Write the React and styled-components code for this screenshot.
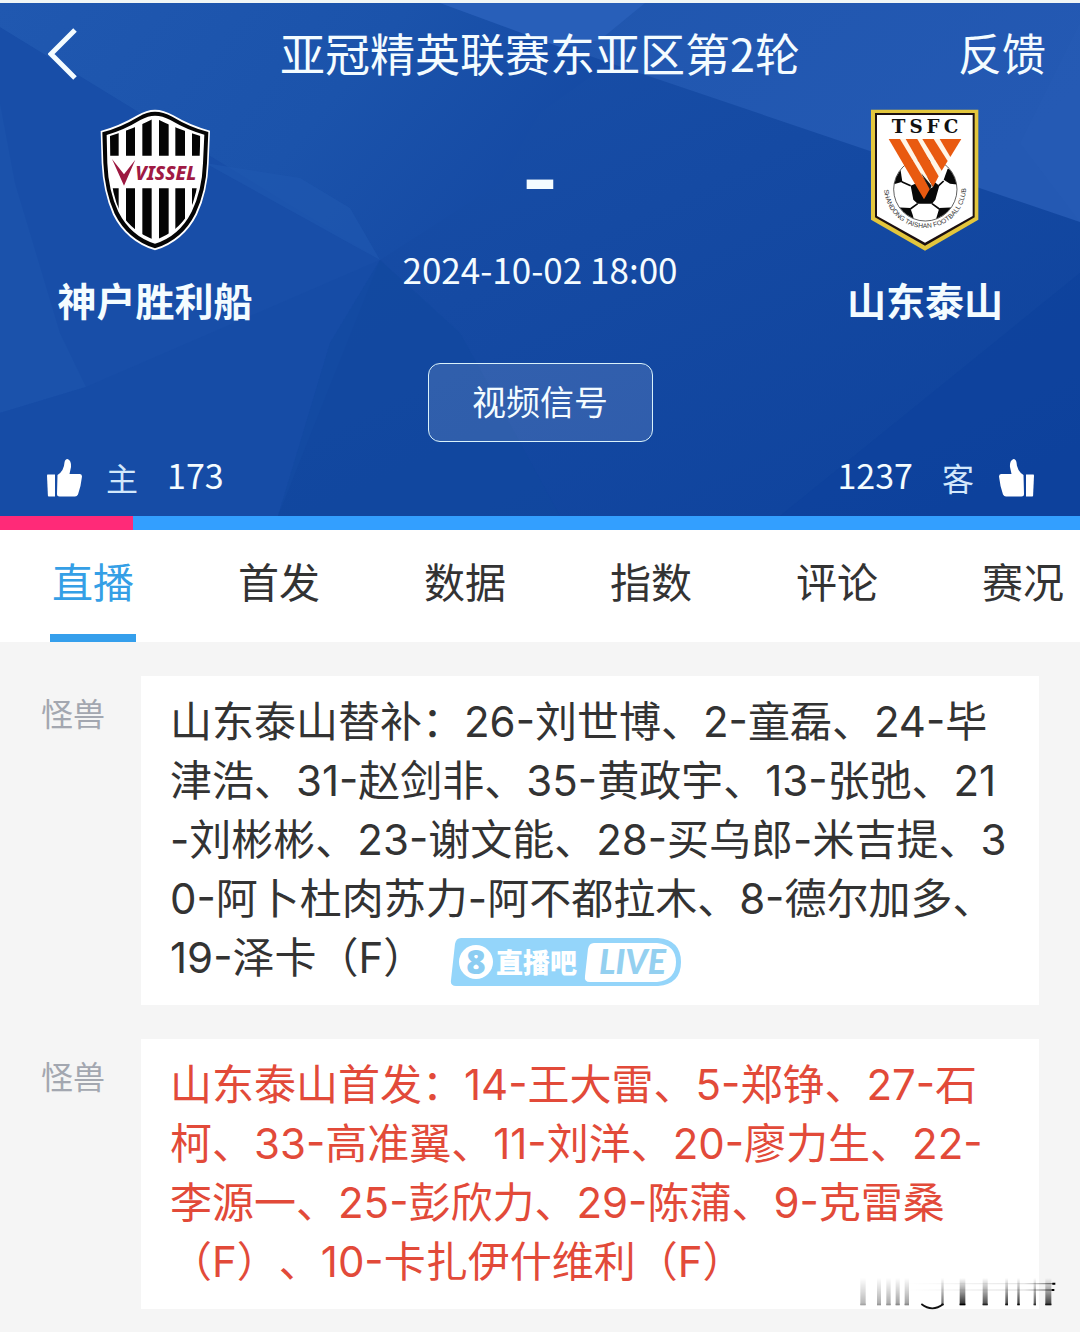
import React from "react";
import styled, { createGlobalStyle } from "styled-components";

const cjk = '"Noto Sans CJK SC", sans-serif';

const GlobalStyle = createGlobalStyle`
  * { box-sizing: border-box; }
  body {
    margin: 0;
    background: #f5f5f5;
    font-family: ${cjk};
    color: #333;
  }
  button { font: inherit; color: inherit; background: none; border: 0; padding: 0; cursor: pointer; }
`;

const Page = styled.div`
  position: relative;
`;

/* ---------- header ---------- */

const Header = styled.header`
  position: relative;
  isolation: isolate;
  overflow: hidden;
  border-top: 3px solid #f0f6f6;
  background: #174ca5;
  color: #f4fcff;
`;

const Backdrop = styled.svg`
  position: absolute;
  inset: 0;
  width: 100%;
  height: 100%;
  z-index: -1;
`;

const TitleBar = styled.div`
  display: grid;
  grid-template-columns: 160px 1fr 160px;
  align-items: center;
  height: 102px;
  padding: 0 34px;
  font-size: 45px;
`;

const BackButton = styled.button`
  && {
    justify-self: start;
    display: flex;
    padding-left: 14px;
  }
`;

const Title = styled.h1`
  margin: 0;
  padding-bottom: 4px;
  font-size: inherit;
  font-weight: 400;
  text-align: center;
  white-space: nowrap;
`;

const Feedback = styled.button`
  && {
    justify-self: end;
    padding-bottom: 4px;
    font-size: 44px;
  }
`;

const Match = styled.section`
  display: grid;
  grid-template-columns: 310px 1fr 310px;
  padding-top: 4px;
`;

const Team = styled.div`
  display: flex;
  flex-direction: column;
  align-items: center;
  gap: 24px;
`;

const Crest = styled.svg`
  width: 110px;
  height: 142px;
`;

const TeamName = styled.h2`
  margin: 0;
  font-size: 39px;
  line-height: 48px;
  font-weight: 700;
`;

const Center = styled.div`
  display: flex;
  flex-direction: column;
  align-items: center;
`;

const Score = styled.div`
  height: 135px;
  font: 700 80px/140px Inter, ${cjk};
`;

const Kickoff = styled.time`
  font-size: 35px;
  line-height: 50px;
`;

const SignalButton = styled.button`
  && {
    width: 225px;
    height: 79px;
    margin-top: 69px;
    padding-bottom: 4px;
    border: 1px solid #d9f2fb;
    border-radius: 12px;
    background: rgba(255, 255, 255, 0.13);
    font-size: 34px;
  }
`;

const Votes = styled.div`
  display: flex;
  justify-content: space-between;
  height: 74px;
  padding: 0 44px 4px;
`;

const VoteButton = styled.button`
  display: flex;
  flex-direction: ${(p) => (p.$away ? "row-reverse" : "row")};
  align-items: center;
  gap: 24px;
`;

const Side = styled.span`
  font-size: 32px;
  line-height: 50px;
  color: #d3e8fb;
`;

const Count = styled.span`
  padding: 0 5px 4px;
  font-size: 34px;
  line-height: 50px;
`;

const Ratio = styled.div`
  display: flex;
  height: 14px;
  background: #339fff;
`;

const RatioHome = styled.div`
  background: #ff2a78;
`;

/* ---------- tabs ---------- */

const Tabs = styled.nav`
  display: flex;
  justify-content: space-between;
  height: 112px;
  padding: 0 14px 0 50px;
  background: #fff;
`;

const Tab = styled.button`
  && {
    width: 86px;
    padding-bottom: ${(p) => (p.$active ? "4px" : "12px")};
    border-bottom: ${(p) => (p.$active ? "8px solid #359fec" : "0")};
    color: ${(p) => (p.$active ? "#359fe6" : "#333")};
    font-size: 41px;
    white-space: nowrap;
  }
`;

/* ---------- feed ---------- */

const Feed = styled.main`
  display: flex;
  flex-direction: column;
  gap: 34px;
  padding: 34px 41px 22px 0;
`;

const Entry = styled.article`
  display: grid;
  grid-template-columns: 141px 1fr;
`;

const Author = styled.span`
  padding: 12px 0 0 41px;
  font-size: 32px;
  line-height: 48px;
  color: #a3a7b0;
`;

const Message = styled.p`
  margin: 0;
  padding: 16px 0 18px 29px;
  background: #fff;
  color: ${(p) => (p.$highlight ? "#e24a39" : "#333")};
  font: 400 42px/59px Inter, ${cjk};
  text-spacing-trim: space-all;
  white-space: nowrap;
`;

const LiveBadge = styled.svg`
  width: 232px;
  height: 50px;
  margin-left: 25px;
  vertical-align: middle;
`;

const Watermark = styled.svg`
  position: absolute;
  right: 23px;
  bottom: 19px;
  width: 200px;
  height: 36px;
  pointer-events: none;
`;

function Facets() {
  return (
    <Backdrop viewBox="0 0 1080 513" preserveAspectRatio="none" aria-hidden="true">
      <defs>
        <linearGradient id="base" x1="0" y1="0" x2="1" y2="1">
          <stop offset="0" stopColor="#1b52ab" />
          <stop offset="0.5" stopColor="#154aa3" />
          <stop offset="1" stopColor="#0e429c" />
        </linearGradient>
        <linearGradient id="upper" x1="0" y1="0" x2="1" y2="0.35">
          <stop offset="0" stopColor="#2058b0" />
          <stop offset="0.6" stopColor="#1b53ab" />
          <stop offset="1" stopColor="#154aa4" />
        </linearGradient>
        <linearGradient id="corner" x1="0" y1="0" x2="1" y2="0.4">
          <stop offset="0" stopColor="#1f56ae" />
          <stop offset="1" stopColor="#2459b3" />
        </linearGradient>
      </defs>
      <path fill="url(#base)" d="M0 0H1080V513H0Z" />
      <path fill="#184ea8" d="M0 24L380 257L278 513H0Z" />
      <path fill="url(#upper)" d="M0 0H440L610 60L540 110L500 180L380 257L0 24Z" />
      <path fill="#2058b0" d="M205 160L300 175L350 205L380 257Z" opacity="0.6" />
      <path fill="#1b52ab" d="M0 100L15 180L60 330L86 384L0 410Z" />
      <path fill="#164ba5" d="M380 257L86 384L0 410V513H278L330 340Z" opacity="0.6" />
      <path fill="#11479f" d="M380 257L330 340L278 513H560L460 330Z" opacity="0.6" />
      <path fill="url(#corner)" d="M440 0H1080V219L610 60Z" />
      <path fill="#285fb9" d="M440 0H645L600 37L560 44Z" />
      <path fill="#285db7" d="M1080 20L1020 140L1080 219Z" opacity="0.3" />
      <path fill="#0c409b" d="M1080 270L780 513H1080Z" opacity="0.5" />
    </Backdrop>
  );
}

function VisselCrest() {
  return (
    <Crest viewBox="60 28 330 426" role="img" aria-label="VISSEL">
      <defs>
        <clipPath id="visselField">
          <path d="M90 109Q160 88 225 55Q290 88 361 109L358 200Q354 285 326 340Q292 398 225 421Q158 398 122 340Q94 285 91 200Z" />
        </clipPath>
      </defs>
      <path fill="#fff" d="M62 94Q118 79 172 47Q199 30 225 30Q251 30 280 47Q334 79 390 93L386 190Q383 277 351 345Q311 425 225 452Q139 425 99 345Q69 277 65 190Z" />
      <path fill="#050505" d="M67 98Q123 83 176 51Q201 36 225 36Q249 36 277 51Q330 83 385 97L381 190Q378 276 346 342Q307 420 225 446Q143 420 104 342Q74 276 70 190Z" />
      <path fill="#fff" d="M80 106Q134 90 181 61Q205 48 225 48Q247 48 271 61Q322 91 373 105L369 191Q366 274 335 336Q298 409 225 432Q152 409 115 336Q85 274 82 191Z" />
      <g clipPath="url(#visselField)" fill="#050505">
        <path d="M88 50h28v118h-28zM138 50h27v118h-27zM187 50h28v118h-28zM237 50h29v118h-29zM286 50h29v118h-29zM336 50h28v118h-28z" />
        <path d="M88 266h28v180h-28zM138 266h27v180h-27zM187 266h28v180h-28zM237 266h29v180h-29zM286 266h29v180h-29zM336 266h28v180h-28z" />
      </g>
      <path fill="#9c1840" d="M96 178L132 224L166 180L132 258Z" />
      <text x="166" y="242" fill="#a01a44" fontFamily="'Noto Sans', sans-serif" fontWeight="800" fontStyle="italic" fontSize="58">VISSEL</text>
    </Crest>
  );
}

function TaishanCrest() {
  return (
    <Crest viewBox="60 28 330 426" role="img" aria-label="TSFC">
      <defs>
        <path id="clubArc" d="M102 262A123 123 0 1 0 348 262" />
        <clipPath id="ball"><circle cx="226" cy="269" r="94" /></clipPath>
      </defs>
      <path fill="#e3c63d" d="M63 30H385V360L225 453L63 360Z" />
      <path fill="#1c1010" d="M75 40H374V353L225 438L75 353Z" />
      <path fill="#fff" d="M81 46H368V349L225 429L81 349Z" />
      <text x="231" y="101" textAnchor="middle" fill="#111" fontFamily="'DejaVu Serif', serif" fontWeight="700" fontSize="55" letterSpacing="12">TSFC</text>
      <circle cx="226" cy="269" r="95" fill="#fff" stroke="#111" strokeWidth="2" />
      <g clipPath="url(#ball)">
        <g fill="#080808">
          <path d="M190 184Q225 172 256 184L236 190L215 186Z" />
          <path d="M182 258L206 248L226 230L245 240L268 258L256 300L246 312H203L190 300Z" />
          <path d="M128 255L134 215L150 200L157 246Z" />
          <path d="M324 255L318 215L293 207L281 240L300 252Z" />
          <path d="M136 323L181 325L188 345L194 368H160Z" />
          <path d="M316 323L268 325L262 345L255 368H294Z" />
        </g>
        <path fill="none" stroke="#080808" strokeWidth="5" d="M155 246L182 258M281 244L266 258M203 312L181 328M246 312L268 328" />
      </g>
      <g fill="#fff6e8">
        <path d="M150 118H167L249 262L240 267Z" />
        <path d="M202 118H217L275 213L266 230Z" />
        <path d="M251 118H269L301 172L293 184Z" />
      </g>
      <g fill="#e95a10">
        <path d="M116 118H150L240 267L222 299Z" />
        <path d="M167 118H202L266 230L249 262Z" />
        <path d="M217 118H251L293 184L275 213Z" />
        <path d="M269 118H334L301 172Z" />
      </g>
      <path fill="#151515" d="M213 220L245 258L240 270Z" />
      <text fill="#333" fontFamily="'Liberation Sans', sans-serif" fontSize="20">
        <textPath href="#clubArc" startOffset="8">SHANDONG TAISHAN FOOTBALL CLUB</textPath>
      </text>
    </Crest>
  );
}

function Thumb({ away }) {
  return (
    <svg width="38" height="40" viewBox="0 0 38 40" aria-hidden="true">
      <g fill="#fff" transform={away ? "translate(38 2) scale(-1 1)" : "translate(1 2)"}>
        <path d="M2.600 15.500H10V37.500H3.700Q3 37.500 2.900 36.500L2 16.500Q2 15.500 2.600 15.500Z" />
        <path d="M12.500 16Q19 12 19.500 3.500Q20 0 22.500 0Q26.500 1.500 26 8L24.500 15H35Q37 15 37 17.500Q36 27 33 35.500Q32 37.500 30 37.500H14.500Q12 37.500 12 35Z" />
      </g>
    </svg>
  );
}

function ZhiboLive() {
  return (
    <LiveBadge viewBox="0 0 232 50" role="img" aria-label="直播吧 LIVE">
      <path fill="#94d5fa" d="M11 1H208Q231 3 231 25Q231 47 208 49H6Q0 49 1 43L5 7Q6 1 11 1Z" />
      <circle cx="26" cy="25" r="17" fill="#fff" />
      <text x="26" y="37" textAnchor="middle" fill="#8ccdf2" fontFamily="'Open Sans', sans-serif" fontWeight="800" fontSize="33">8</text>
      <text x="46" y="36" fill="#fff" fontFamily="'Noto Sans CJK SC', sans-serif" fontWeight="900" fontSize="27">直播吧</text>
      <path fill="#fff" d="M144 6H207Q226 8 226 25Q226 43 207 45H140Q134 45 135 39L138 12Q139 6 144 6Z" />
      <text x="149" y="37" fill="#94d0f0" fontFamily="Lato, sans-serif" fontWeight="900" fontStyle="italic" fontSize="34">LIVE</text>
    </LiveBadge>
  );
}

const strokes = [
  [60, 16, 0.35], [110, 12, 0.4], [138, 13, 0.4], [166, 12, 0.45], [193, 13, 0.45],
  [303, 7, 0.7], [358, 17, 1], [427, 15, 0.85], [495, 8, 0.9], [531, 7, 0.95],
  [580, 7, 0.8], [615, 18, 0.9],
];

function CornerMark() {
  return (
    <Watermark viewBox="50 50 600 108" aria-hidden="true">
      <defs>
        <linearGradient id="fade" x1="0" y1="0" x2="0" y2="1">
          <stop offset="0" stopColor="#000" stopOpacity="0" />
          <stop offset="0.5" stopColor="#000" stopOpacity="0.4" />
          <stop offset="1" stopColor="#000" stopOpacity="0.85" />
        </linearGradient>
        <linearGradient id="side" x1="0" y1="0" x2="1" y2="0">
          <stop offset="0" stopColor="#000" stopOpacity="0" />
          <stop offset="0.8" stopColor="#000" stopOpacity="0.1" />
          <stop offset="1" stopColor="#000" stopOpacity="0.5" />
        </linearGradient>
      </defs>
      {strokes.map(([x, w, o]) => (
        <g key={x} opacity={o}>
          <rect x={x} y="56" width={w} height="81" fill="url(#fade)" />
          <rect x={x} y="133" width={w} height="5" />
        </g>
      ))}
      <path d="M243 134Q276 160 309 134" fill="none" stroke="#111" strokeWidth="5" />
      <path d="M200 71H640V75H200ZM200 90H640V94H200Z" fill="url(#side)" />
      <path d="M636 70h9v6h-9zM634 89h8v6h-8z" />
    </Watermark>
  );
}

const tabs = ["直播", "首发", "数据", "指数", "评论", "赛况"];

const entries = [
  {
    author: "怪兽",
    live: true,
    lines: [
      "山东泰山替补：26-刘世博、2-童磊、24-毕",
      "津浩、31-赵剑非、35-黄政宇、13-张弛、21",
      "-刘彬彬、23-谢文能、28-买乌郎-米吉提、3",
      "0-阿卜杜肉苏力-阿不都拉木、8-德尔加多、",
      "19-泽卡（F）",
    ],
  },
  {
    author: "怪兽",
    highlight: true,
    lines: [
      "山东泰山首发：14-王大雷、5-郑铮、27-石",
      "柯、33-高准翼、11-刘洋、20-廖力生、22-",
      "李源一、25-彭欣力、29-陈蒲、9-克雷桑",
      "（F）、10-卡扎伊什维利（F）",
    ],
  },
];

export default function App() {
  const home = 173;
  const away = 1237;
  return (
    <Page lang="zh-CN">
      <GlobalStyle />
      <Header>
        <Facets />
        <TitleBar>
          <BackButton aria-label="返回">
            <svg width="32" height="52" viewBox="0 0 32 52" aria-hidden="true">
              <path d="M27 2L3 26L27 50" fill="none" stroke="#f4fcff" strokeWidth="5" />
            </svg>
          </BackButton>
          <Title>亚冠精英联赛东亚区第2轮</Title>
          <Feedback>反馈</Feedback>
        </TitleBar>
        <Match>
          <Team>
            <VisselCrest />
            <TeamName>神户胜利船</TeamName>
          </Team>
          <Center>
            <Score>-</Score>
            <Kickoff dateTime="2024-10-02T18:00">2024-10-02 18:00</Kickoff>
            <SignalButton>视频信号</SignalButton>
          </Center>
          <Team>
            <TaishanCrest />
            <TeamName>山东泰山</TeamName>
          </Team>
        </Match>
        <Votes>
          <VoteButton>
            <Thumb />
            <Side>主</Side>
            <Count>{home}</Count>
          </VoteButton>
          <VoteButton $away>
            <Thumb away />
            <Side>客</Side>
            <Count>{away}</Count>
          </VoteButton>
        </Votes>
      </Header>
      <Ratio>
        <RatioHome style={{ width: `${(home / (home + away)) * 100}%` }} />
      </Ratio>
      <Tabs>
        {tabs.map((name, i) => (
          <Tab key={name} $active={i === 0}>{name}</Tab>
        ))}
      </Tabs>
      <Feed>
        {entries.map((entry, i) => (
          <Entry key={i}>
            <Author>{entry.author}</Author>
            <Message $highlight={entry.highlight}>
              {entry.lines.map((line, n) => (
                <React.Fragment key={n}>
                  {n > 0 && <br />}
                  {line}
                </React.Fragment>
              ))}
              {entry.live && <ZhiboLive />}
            </Message>
          </Entry>
        ))}
      </Feed>
      <CornerMark />
    </Page>
  );
}
